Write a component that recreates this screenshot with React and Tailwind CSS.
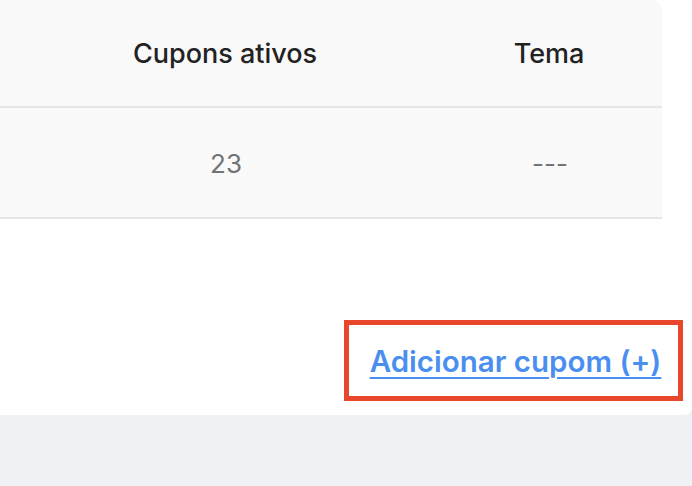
export default function App() {
  return (
    <div className="min-h-[486px] w-[692px] bg-[#f0f1f5] font-['Inter',sans-serif]">
      <div className="h-[415px] w-[692px] bg-white rounded-br-[8px] flex flex-col">
        <div className="w-[662px] bg-[#f9f9f9] rounded-tr-[10px]">
          <div className="h-[108px] flex items-center border-b-2 border-[#e6e6e6] text-[27px] font-medium text-[#222222]">
            <div className="w-[450px] text-center pt-[2px]">Cupons ativos</div>
            <div className="w-[198px] text-center pt-[2px]">Tema</div>
          </div>
          <div className="h-[111px] flex items-center border-b-2 border-[#e6e6e6] text-[26px] text-[#737373]">
            <div className="w-[452px] text-center pt-[2px]">23</div>
            <div className="w-[196px] text-center pt-[2px]">---</div>
          </div>
        </div>
        <div className="flex justify-end pr-[9px] mt-[101px]">
          <div className="w-[339px] h-[81px] border-[5px] border-[#e8472b] flex items-center justify-center pl-[4px] pt-[2px]">
            <a href="#" className="text-[29.5px] font-semibold text-[#4a8ff0] underline underline-offset-[5px] decoration-2">
              Adicionar cupom (+)
            </a>
          </div>
        </div>
      </div>
    </div>
  );
}
